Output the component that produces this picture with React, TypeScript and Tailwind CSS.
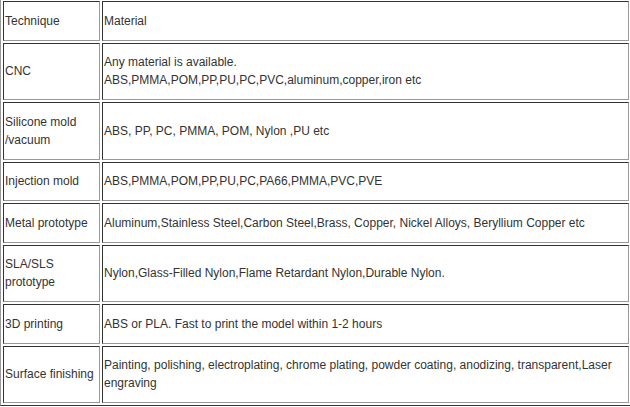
const rows: { tech: React.ReactNode; material: React.ReactNode }[] = [
  { tech: 'Technique', material: 'Material' },
  {
    tech: 'CNC',
    material: (
      <>
        Any material is available.
        <br />
        ABS,PMMA,POM,PP,PU,PC,PVC,aluminum,copper,iron etc
      </>
    ),
  },
  {
    tech: (
      <>
        Silicone mold
        <br />
        /vacuum
      </>
    ),
    material: 'ABS, PP, PC, PMMA, POM, Nylon ,PU etc',
  },
  { tech: 'Injection mold', material: 'ABS,PMMA,POM,PP,PU,PC,PA66,PMMA,PVC,PVE' },
  {
    tech: 'Metal prototype',
    material: 'Aluminum,Stainless Steel,Carbon Steel,Brass, Copper, Nickel Alloys, Beryllium Copper etc',
  },
  {
    tech: (
      <>
        SLA/SLS
        <br />
        prototype
      </>
    ),
    material: 'Nylon,Glass-Filled Nylon,Flame Retardant Nylon,Durable Nylon.',
  },
  { tech: '3D printing', material: 'ABS or PLA. Fast to print the model within 1-2 hours' },
  {
    tech: 'Surface finishing',
    material:
      'Painting, polishing, electroplating, chrome plating, powder coating, anodizing, transparent,Laser engraving',
  },
];

// inset cell border: dark top/left, light bottom/right
const cell =
  'border border-solid border-t-[#333] border-l-[#333] border-b-[#999] border-r-[#999] px-px py-[9.75px] align-middle text-left font-normal';

export default function App() {
  return (
    <div className="bg-white w-[630px] h-[407px] overflow-hidden">
      <table
        className="-mt-[2px] w-[632px] border-separate border-spacing-[2px] border border-solid border-t-[#999] border-l-[#999] border-b-[#333] border-r-[#333] text-[12px] leading-[18px] text-[#333]"
        style={{ fontFamily: '"Liberation Sans", Arial, sans-serif' }}
      >
        <tbody>
          {rows.map((r, i) => (
            <tr key={i}>
              <td className={`${cell} w-[97px]`}>{r.tech}</td>
              <td className={cell}>{r.material}</td>
            </tr>
          ))}
        </tbody>
      </table>
    </div>
  );
}
